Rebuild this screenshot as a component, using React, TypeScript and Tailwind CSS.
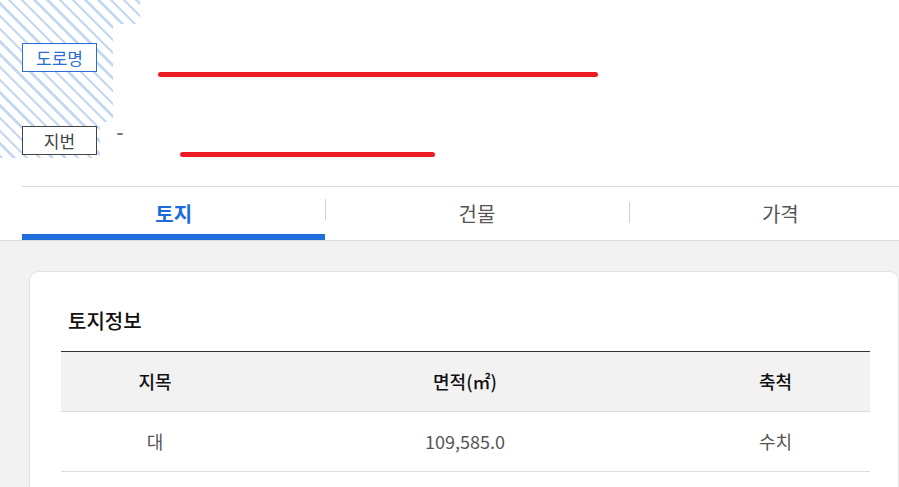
const font = "font-['Noto_Sans_CJK_KR','Noto_Sans',sans-serif]";

function Stripes() {
  return (
    <div className="absolute left-0 top-0 w-[140px] h-[158px] bg-[repeating-linear-gradient(45deg,#c6d9f4_0px,#c6d9f4_2.5px,#ffffff_2.5px,#ffffff_9px)] [clip-path:polygon(0_0,140px_0,140px_24px,113px_24px,113px_122px,100px_122px,100px_158px,0_158px)]" />
  );
}

export default function App() {
  const tabs = ["토지", "건물", "가격"];

  return (
    <div className={`relative w-[899px] h-[487px] overflow-hidden bg-white ${font}`}>
      {/* Address header */}
      <div className="relative h-[186px]">
        <Stripes />
        <div className="relative flex flex-col pt-[43px] pl-[22px]">
          <div className="flex items-start">
            <span className="w-[75px] h-[29px] border border-[#2a6fd6] bg-white text-[#2a6fd6] text-[17px] leading-[27px] text-center">
              도로명
            </span>
            <span className="ml-[61px] mt-[29px] w-[440px] h-[5px] rounded-full bg-[#ed1c24]" />
          </div>
          <div className="flex items-start mt-[49px]">
            <span className="w-[75px] h-[29px] border border-[#444] bg-white text-[#444] text-[17px] leading-[27px] text-center">
              지번
            </span>
            <span className="ml-[20px] mt-[7px] w-[6px] h-[2px] rounded-full bg-[#777]" />
            <span className="ml-[57px] mt-[26px] w-[255px] h-[5px] rounded-full bg-[#ed1c24]" />
          </div>
        </div>
      </div>

      {/* Tabs */}
      <div className="ml-[22px] w-[910px] flex border-t border-[#dcdcdc]">
        {tabs.map((t, i) => (
          <div key={t} className="relative flex-1 h-[53px] flex items-center justify-center">
            {i > 0 && (
              <span className={`absolute left-0 w-px h-[21px] bg-[#d0d0d0] ${i === 1 ? "top-[12px]" : "top-[15px]"}`} />
            )}
            <span
              className={`text-[20px] leading-none ${
                i === 0 ? "text-[#1b6cdc] font-bold" : "text-[#555]"
              }`}
            >
              {t}
            </span>
            {i === 0 && <span className="absolute left-0 right-0 bottom-0 h-[6px] bg-[#1e6fdc]" />}
          </div>
        ))}
      </div>

      {/* Content */}
      <div className="border-t border-[#dddddd] bg-[#f2f2f2] h-full pt-[30px] pl-[29px]">
        <div className="w-[870px] bg-white border border-[#e3e3e3] rounded-[10px] pt-[34px] pl-[31px] pr-[28px] pb-[40px]">
          <h2 className="pl-[7px] text-[20px] leading-[30px] font-medium text-[#111]">토지정보</h2>
          <table className="mt-[15px] w-full border-t border-[#333] text-[18px]">
            <colgroup>
              <col className="w-[188px]" />
              <col className="w-[432px]" />
              <col />
            </colgroup>
            <thead>
              <tr className="bg-[#f2f2f2] border-b border-[#dcdcdc] h-[60px]">
                <th className="font-medium text-[#111]">지목</th>
                <th className="font-medium text-[#111]">면적(㎡)</th>
                <th className="font-medium text-[#111]">축척</th>
              </tr>
            </thead>
            <tbody>
              <tr className="border-b border-[#dcdcdc] h-[60px] text-[#555]">
                <td className="text-center">대</td>
                <td className="text-center">109,585.0</td>
                <td className="text-center">수치</td>
              </tr>
            </tbody>
          </table>
        </div>
      </div>
    </div>
  );
}
